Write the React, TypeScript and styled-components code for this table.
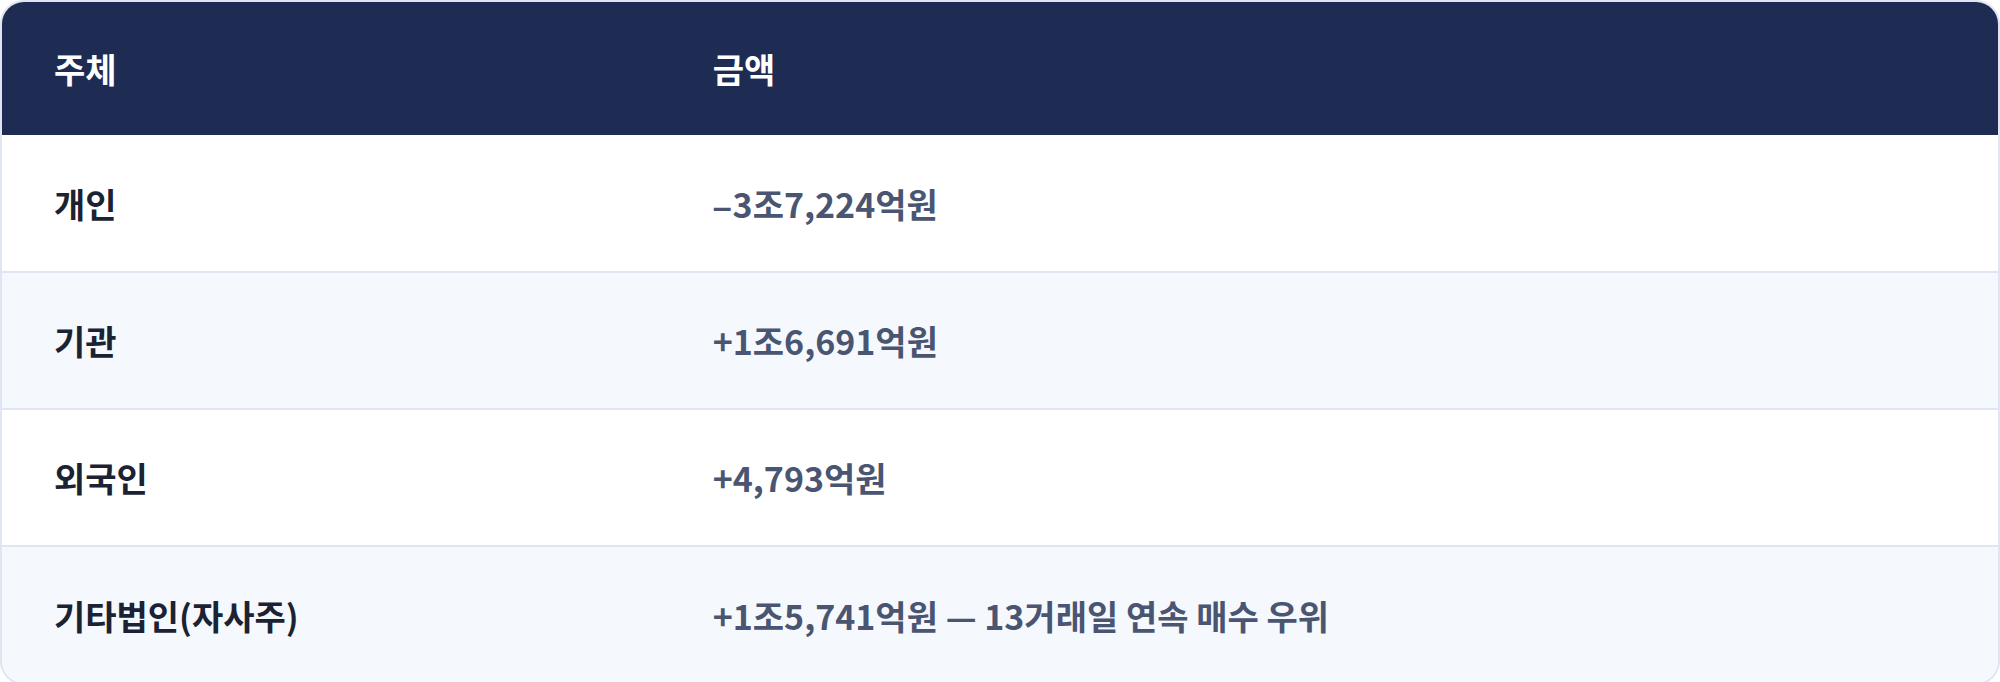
import * as React from "react"
import styled, { createGlobalStyle } from "styled-components"

const GlobalStyle = createGlobalStyle`
    html, body {
        margin: 0;
        padding: 0;
        background: #ffffff;
    }
    body {
        font-family: "Noto Sans CJK KR", "Noto Sans", sans-serif;
    }
    * {
        box-sizing: border-box;
    }
`

const Card = styled.div`
    width: 2000px;
    border: 2px solid #dfe5f1;
    border-radius: 24px;
    overflow: hidden;
    background: #ffffff;
`

const Table = styled.table`
    width: 100%;
    border-collapse: collapse;
    table-layout: fixed;
`

const HeadCell = styled.th<{ $wide?: boolean }>`
    width: ${(p) => (p.$wide ? "auto" : "33%")};
    height: 133px;
    padding: 0 52px;
    background: #1e2c54;
    color: #ffffff;
    font-size: 34px;
    font-weight: 700;
    text-align: left;
    vertical-align: middle;
`

const Row = styled.tr<{ $striped?: boolean }>`
    background: ${(p) => (p.$striped ? "#f5f8fd" : "#ffffff")};
    border-bottom: 2px solid #dfe5f1;

    &:last-child {
        border-bottom: none;
    }
`

const Cell = styled.td<{ $tone: "label" | "value" }>`
    height: 137px;
    padding: 0 52px;
    font-size: 34px;
    font-weight: 700;
    color: ${(p) => (p.$tone === "label" ? "#1b2233" : "#4a5572")};
    vertical-align: middle;
    white-space: nowrap;
`

const Sign = styled.span`
    font-family: "Liberation Sans", sans-serif;
    margin-right: 1px;
`

interface IFlowRow {
    who: string
    sign?: string
    amount: string
}

const rows: IFlowRow[] = [
    { who: "개인", sign: "–", amount: "3조7,224억원" },
    { who: "기관", amount: "+1조6,691억원" },
    { who: "외국인", amount: "+4,793억원" },
    { who: "기타법인(자사주)", amount: "+1조5,741억원 — 13거래일 연속 매수 우위" },
]

export default function App() {
    return (
        <>
            <GlobalStyle />
            <Card>
                <Table>
                    <thead>
                        <tr>
                            <HeadCell>주체</HeadCell>
                            <HeadCell $wide>금액</HeadCell>
                        </tr>
                    </thead>
                    <tbody>
                        {rows.map((r, i) => (
                            <Row key={r.who} $striped={i % 2 === 1}>
                                <Cell $tone="label">{r.who}</Cell>
                                <Cell $tone="value">
                                    {r.sign && <Sign>{r.sign}</Sign>}
                                    {r.amount}
                                </Cell>
                            </Row>
                        ))}
                    </tbody>
                </Table>
            </Card>
        </>
    )
}
